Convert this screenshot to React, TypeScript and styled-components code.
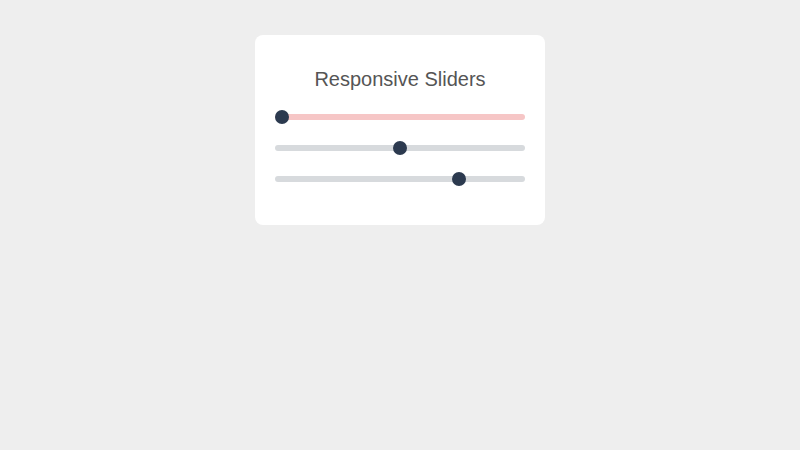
import { useState } from "react";
import styled, { createGlobalStyle } from "styled-components";

const GlobalStyle = createGlobalStyle`
    * {
        box-sizing: border-box;
    }

    body {
        margin: 0;
        background-color: #eeeeee;
        font-family: "Liberation Sans", Arial, sans-serif;
    }
`;

export default function App() {
    const [values, setValues] = useState([0, 50, 75]);

    function change(index: number, value: number) {
        setValues(values.map((v, i) => (i === index ? value : v)));
    }

    return (
        <>
            <GlobalStyle />
            <Page>
                <Card>
                    <Title>Responsive Sliders</Title>
                    {values.map((value, i) => (
                        <Row key={i}>
                            <Slider
                                type="range"
                                min={0}
                                max={100}
                                value={value}
                                $active={i === 0}
                                onChange={(e) => change(i, Number(e.target.value))}
                            />
                        </Row>
                    ))}
                </Card>
            </Page>
        </>
    );
}

const Page = styled.div`
    display: flex;
    justify-content: center;
    padding-top: 35px;
`;

const Card = styled.div`
    width: 290px;
    height: 190px;
    background-color: #FFF;
    border-radius: 8px;
    padding: 32px 20px 0;
    display: flex;
    flex-direction: column;
`;

const Title = styled.h2`
    margin: 0 0 10px;
    font-size: 20px;
    font-weight: 400;
    line-height: 24px;
    color: #555;
    text-align: center;
`;

const Row = styled.div`
    height: 31px;
    display: flex;
    align-items: center;
`;

const Slider = styled.input<{ $active: boolean }>`
    -webkit-appearance: none;
    appearance: none;
    width: 100%;
    height: 6px;
    margin: 0;
    border-radius: 3px;
    background-color: ${(p) => (p.$active ? "#f6c6c6" : "#d7dadd")};
    outline: none;
    cursor: pointer;

    &::-webkit-slider-thumb {
        -webkit-appearance: none;
        appearance: none;
        width: 14px;
        height: 14px;
        border-radius: 50%;
        background-color: #2c3a4f;
        border: none;
    }

    &::-moz-range-thumb {
        width: 14px;
        height: 14px;
        border-radius: 50%;
        background-color: #2c3a4f;
        border: none;
    }
`;
